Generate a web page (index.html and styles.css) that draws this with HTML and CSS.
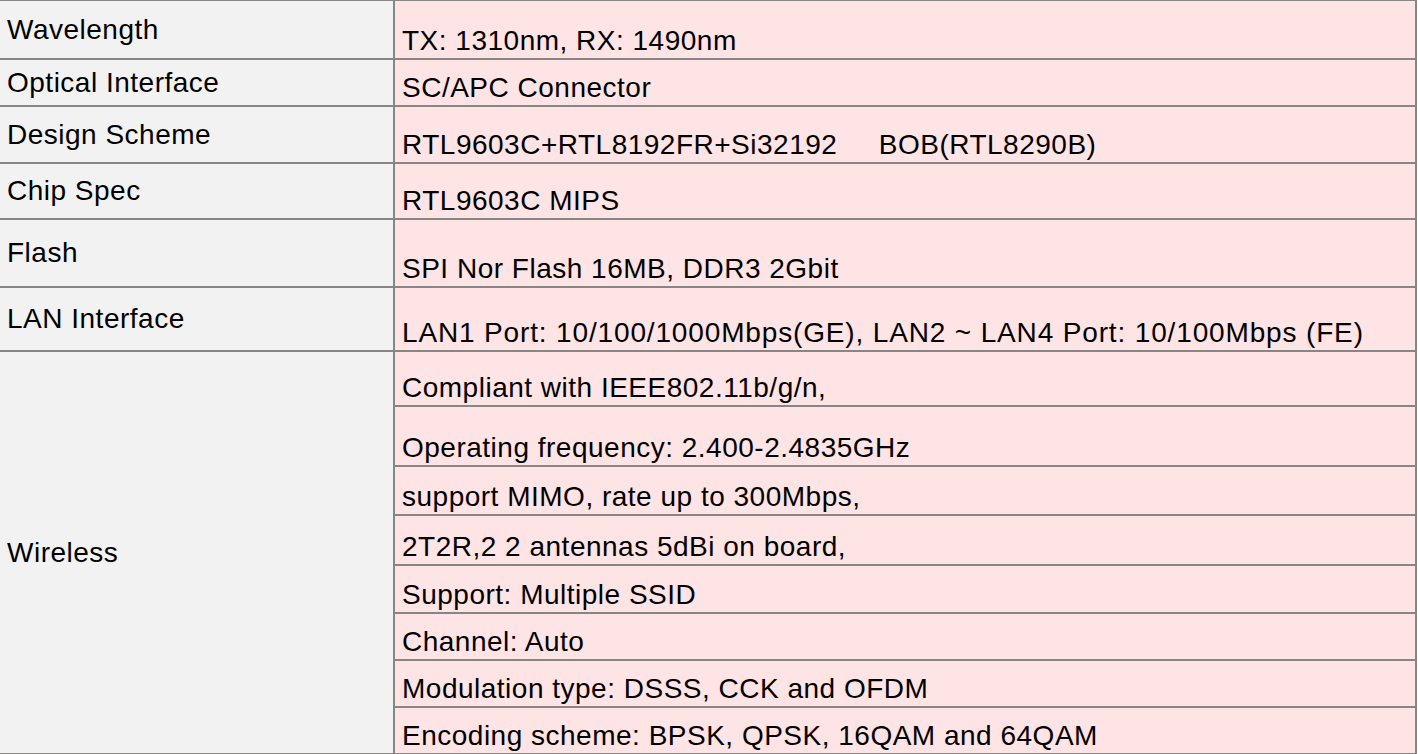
FILE: index.html
```html
<!DOCTYPE html>
<html>
<head>
<meta charset="utf-8">
<link rel="stylesheet" href="styles.css">
</head>
<body>
<table class="spec">
  <tr class="h59"><td class="k">Wavelength</td><td class="v">TX: 1310nm, RX: 1490nm</td></tr>
  <tr class="h47"><td class="k">Optical Interface</td><td class="v">SC/APC Connector</td></tr>
  <tr class="h57"><td class="k">Design Scheme</td><td class="v">RTL9603C+RTL8192FR+Si32192&nbsp;&nbsp;&nbsp;&nbsp;&nbsp;BOB(RTL8290B)</td></tr>
  <tr class="h56"><td class="k">Chip Spec</td><td class="v">RTL9603C MIPS</td></tr>
  <tr class="h68"><td class="k">Flash</td><td class="v">SPI Nor Flash 16MB, DDR3 2Gbit</td></tr>
  <tr class="h64"><td class="k">LAN Interface</td><td class="v lan">LAN1 Port: 10/100/1000Mbps(GE), LAN2 ~ LAN4 Port: 10/100Mbps (FE)</td></tr>
  <tr class="h55"><td class="k" rowspan="8">Wireless</td><td class="v">Compliant with IEEE802.11b/g/n,</td></tr>
  <tr class="h60"><td class="v">Operating frequency: 2.400-2.4835GHz</td></tr>
  <tr class="h49"><td class="v">support MIMO, rate up to 300Mbps,</td></tr>
  <tr class="h50"><td class="v">2T2R,2 2 antennas 5dBi on board,</td></tr>
  <tr class="h48"><td class="v">Support: Multiple SSID</td></tr>
  <tr class="h47"><td class="v">Channel: Auto</td></tr>
  <tr class="h47"><td class="v">Modulation type: DSSS, CCK and OFDM</td></tr>
  <tr class="h47"><td class="v">Encoding scheme: BPSK, QPSK, 16QAM and 64QAM</td></tr>
</table>
</body>
</html>
```

FILE: styles.css
```css
html, body {
  margin: 0;
  padding: 0;
  background: #ffffff;
}

.spec {
  border-collapse: separate;
  border-spacing: 0;
  width: 1417px;
  border-top: 1px solid #888585;
  font-family: "Liberation Sans", Arial, sans-serif;
  font-size: 28px;
  letter-spacing: 0.5px;
  color: #000;
  table-layout: fixed;
}

.spec td {
  padding: 0;
  border-bottom: 2px solid #888585;
  border-right: 2px solid #888585;
  line-height: 32px;
  white-space: nowrap;
}

.spec .k {
  width: 386px;
  background: #f2f2f2;
  vertical-align: middle;
  padding-left: 7px;
}

.spec .v {
  background: #fee4e4;
  vertical-align: bottom;
  padding-left: 7px;
  padding-bottom: 1px;
}

.spec .lan {
  letter-spacing: 0.85px;
}

.h59 { height: 59px; }
.h47 { height: 47px; }
.h57 { height: 57px; }
.h56 { height: 56px; }
.h68 { height: 68px; }
.h64 { height: 64px; }
.h55 { height: 55px; }
.h60 { height: 60px; }
.h49 { height: 49px; }
.h50 { height: 50px; }
.h48 { height: 48px; }
```
